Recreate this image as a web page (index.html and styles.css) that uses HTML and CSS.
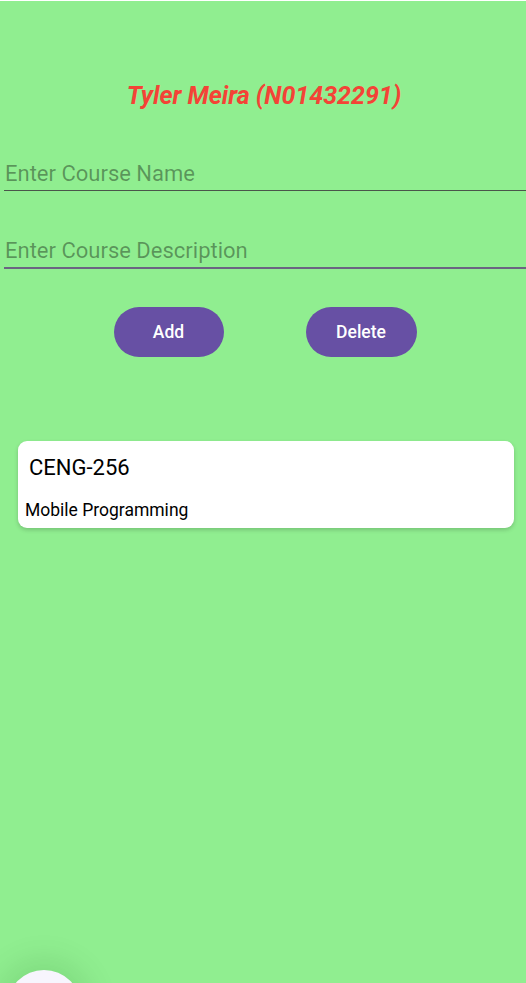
FILE: index.html
```html
<!DOCTYPE html>
<html>
<head>
<meta charset="utf-8">
<link rel="stylesheet" href="styles.css">
</head>
<body>
<div class="screen">
  <h1 class="title">Tyler Meira (N01432291)</h1>
  <div class="field field-name"><span class="placeholder">Enter Course Name</span></div>
  <div class="field field-desc"><span class="placeholder">Enter Course Description</span></div>
  <div class="actions">
    <button class="btn btn-add">Add</button>
    <button class="btn btn-delete">Delete</button>
  </div>
  <div class="card">
    <div class="card-title">CENG-256</div>
    <div class="card-desc">Mobile Programming</div>
  </div>
  <div class="fab"></div>
</div>
</body>
</html>
```
FILE: styles.css
```css
html, body {
  margin: 0;
  padding: 0;
  height: 100%;
  overflow: hidden;
}
body {
  background: #90ee90;
  font-family: Roboto, "Noto Sans", sans-serif;
}
.screen {
  position: relative;
  height: 983px;
  overflow: hidden;
  box-sizing: border-box;
  border-top: 1px solid #ffffff;
  padding: 0 0 0 4px;
}
.title {
  margin: 80px 0 0 0;
  font-size: 25px;
  line-height: 30px;
  font-weight: 700;
  font-style: italic;
  color: #f44336;
  text-align: center;
  padding-right: 2px;
}
.field {
  font-size: 22px;
  line-height: 26px;
  color: rgba(0, 0, 0, 0.38);
  padding-left: 1px;
}
.field-name {
  margin-top: 50px;
  padding-bottom: 3px;
  border-bottom: 1px solid #4a564a;
}
.field-desc {
  margin-top: 47px;
  padding-bottom: 3px;
  border-bottom: 2px solid #6b6482;
}
.actions {
  display: flex;
  justify-content: center;
  gap: 82px;
  margin-top: 38px;
}
.btn {
  height: 50px;
  border: none;
  border-radius: 25px;
  background: #6750a4;
  color: #ffffff;
  font-family: Roboto, "Noto Sans", sans-serif;
  font-size: 17.5px;
  font-weight: 500;
  padding: 0;
}
.btn-add { width: 110px; }
.btn-delete { width: 111px; }
.card {
  margin: 84px 12px 0 14px;
  background: #ffffff;
  border-radius: 9px;
  box-shadow: 0 2px 4px rgba(0, 0, 0, 0.18);
  padding: 14px 0 7px 0;
  color: #000000;
}
.card-title {
  font-size: 22px;
  line-height: 26px;
  padding-left: 11px;
}
.card-desc {
  margin-top: 19px;
  font-size: 17.5px;
  line-height: 21px;
  padding-left: 7px;
}
.fab {
  position: absolute;
  left: 7px;
  top: 969px;
  width: 74px;
  height: 74px;
  border-radius: 50%;
  background: #f7f5fd;
  box-shadow: 0 0 30px 10px rgba(0, 80, 0, 0.12);
}
```
